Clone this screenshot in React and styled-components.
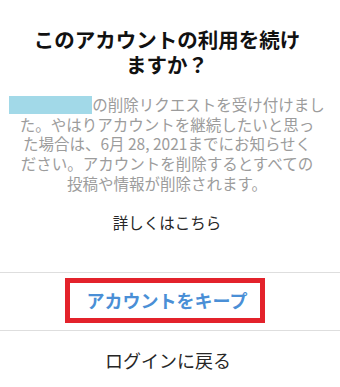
import React from 'react'
import styled, { createGlobalStyle } from 'styled-components'

const GlobalStyle = createGlobalStyle`
  html, body {
    margin: 0;
    padding: 0;
    background: #ffffff;
  }
  body {
    font-family: "Noto Sans CJK JP", "Noto Sans", sans-serif;
    -webkit-font-smoothing: antialiased;
  }
`

const Sheet = styled.div`
  width: 340px;
  height: 387px;
  overflow: hidden;
  background: #ffffff;
  display: flex;
  flex-direction: column;
`

const Top = styled.div`
  display: flex;
  flex-direction: column;
  align-items: center;
  padding: 27px 6px 40px 0;
`

const Title = styled.h1`
  margin: 0;
  font-size: 20.5px;
  line-height: 25px;
  font-weight: 700;
  color: #111111;
  text-align: center;
  white-space: nowrap;
`

const Message = styled.p`
  margin: 18px 0 0;
  font-size: 15.5px;
  line-height: 19.7px;
  color: #9c9c9c;
  text-align: center;
  white-space: nowrap;
`

const Masked = styled.span`
  display: inline-block;
  width: 83px;
  height: 18px;
  vertical-align: -3px;
  background: #a2d9e8;
`

const MoreLink = styled.div`
  margin-top: 18px;
  font-size: 15.5px;
  line-height: 20px;
  color: #262626;
  text-align: center;
`

const Row = styled.div`
  border-top: 1px solid #dedede;
  height: ${p => p.h}px;
  display: flex;
  align-items: center;
  justify-content: center;
  padding-right: ${p => p.shift || 0}px;
`

const KeepButton = styled.button`
  box-sizing: border-box;
  width: 200px;
  height: 45px;
  margin-top: -2px;
  border: 5px solid #e3222b;
  background: #ffffff;
  font-family: inherit;
  font-size: 18px;
  font-weight: 700;
  color: #4a8fd6;
  padding: 0 0 0 4px;
  cursor: pointer;
`

const BackLink = styled.div`
  font-size: 18px;
  color: #262626;
  margin-top: 2px;
`

export default function App() {
  return (
    <Sheet>
      <GlobalStyle />
      <Top>
        <Title>
          このアカウントの利用を続け<br />ますか？
        </Title>
        <Message>
          <Masked />の削除リクエストを受け付けまし<br />
          た。やはりアカウントを継続したいと思っ<br />
          た場合は、6月 28, 2021までにお知らせく<br />
          ださい。アカウントを削除するとすべての<br />
          投稿や情報が削除されます。
        </Message>
        <MoreLink>詳しくはこちら</MoreLink>
      </Top>
      <Row h={61} shift={10}>
        <KeepButton>アカウントをキープ</KeepButton>
      </Row>
      <Row h={60} shift={4}>
        <BackLink>ログインに戻る</BackLink>
      </Row>
    </Sheet>
  )
}
